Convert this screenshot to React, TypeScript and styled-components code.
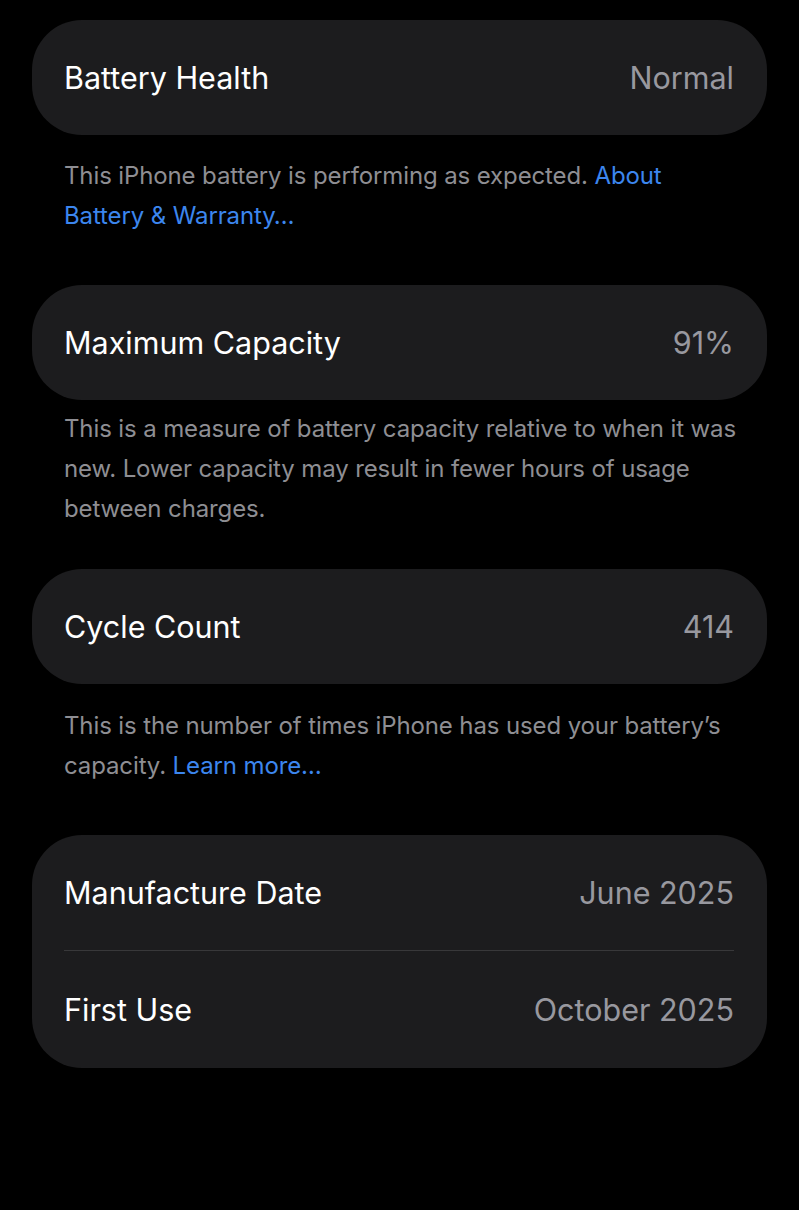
import React from "react";
import styled, { createGlobalStyle } from "styled-components";

const GlobalStyle = createGlobalStyle`
  html, body {
    margin: 0;
    padding: 0;
    background: #000;
  }
  body {
    font-family: Inter, "Noto Sans", "Liberation Sans", sans-serif;
    -webkit-font-smoothing: antialiased;
  }
`;

const Page = styled.div`
  width: 799px;
  min-height: 1210px;
  box-sizing: border-box;
  padding: 20px 32px 0;
  background: #000;
`;

const Section = styled.section<{ $after: number }>`
  margin-bottom: ${(p) => p.$after}px;
`;

const Card = styled.div`
  background: #1c1c1e;
  border-radius: 50px;
  padding: 0 33px 0 32px;
`;

const Row = styled.div`
  display: flex;
  align-items: center;
  justify-content: space-between;
  height: 115px;

  & + & {
    border-top: 1px solid #38383a;
    height: 117px;
  }
`;

const Label = styled.span`
  font-size: 30.5px;
  color: #ffffff;
`;

const Value = styled.span`
  font-size: 30.5px;
  color: #98989f;
`;

const Footnote = styled.p<{ $top: number }>`
  margin: ${(p) => p.$top}px 0 0;
  padding: 0 20px 0 32px;
  font-size: 24px;
  line-height: 40px;
  letter-spacing: -0.12px;
  color: #8e8e93;
`;

const Link = styled.span`
  color: #3c86ee;
`;

type Item = { label: string; value: string };

function InfoCard({ items }: { items: Item[] }) {
  return (
    <Card>
      {items.map((it) => (
        <Row key={it.label}>
          <Label>{it.label}</Label>
          <Value>{it.value}</Value>
        </Row>
      ))}
    </Card>
  );
}

export default function App() {
  return (
    <>
      <GlobalStyle />
      <Page>
        <Section $after={49}>
          <InfoCard items={[{ label: "Battery Health", value: "Normal" }]} />
          <Footnote $top={21}>
            This iPhone battery is performing as expected. <Link>About Battery &amp; Warranty…</Link>
          </Footnote>
        </Section>
        <Section $after={40}>
          <InfoCard items={[{ label: "Maximum Capacity", value: "91%" }]} />
          <Footnote $top={9}>
            This is a measure of battery capacity relative to when it was new. Lower capacity may
            result in fewer hours of usage between charges.
          </Footnote>
        </Section>
        <Section $after={49}>
          <InfoCard items={[{ label: "Cycle Count", value: "414" }]} />
          <Footnote $top={22}>
            This is the number of times iPhone has used your battery’s capacity.{" "}
            <Link>Learn more…</Link>
          </Footnote>
        </Section>
        <Section $after={0}>
          <InfoCard
            items={[
              { label: "Manufacture Date", value: "June 2025" },
              { label: "First Use", value: "October 2025" },
            ]}
          />
        </Section>
      </Page>
    </>
  );
}
